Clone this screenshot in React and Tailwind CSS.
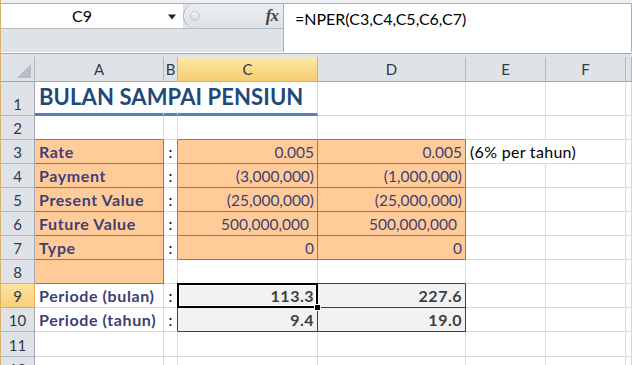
import React from "react";

// column definitions: width classes written out in full
const COLS = [
  { key: "A", w: "w-[129px]" },
  { key: "B", w: "w-[14px]" },
  { key: "C", w: "w-[140px]" },
  { key: "D", w: "w-[148px]" },
  { key: "E", w: "w-[80px]" },
  { key: "F", w: "w-[80px]" },
  { key: "G", w: "w-[6px]" },
];

const ROWS = [
  { n: 1, h: "h-[34px]" },
  { n: 2, h: "h-[24px]" },
  { n: 3, h: "h-[24px]" },
  { n: 4, h: "h-[24px]" },
  { n: 5, h: "h-[24px]" },
  { n: 6, h: "h-[24px]" },
  { n: 7, h: "h-[24px]" },
  { n: 8, h: "h-[24px]" },
  { n: 9, h: "h-[24px]" },
  { n: 10, h: "h-[24px]" },
  { n: 11, h: "h-[25px]" },
  { n: 12, h: "h-[24px]" },
];

const LABELS = {
  3: "Rate",
  4: "Payment",
  5: "Present Value",
  6: "Future Value",
  7: "Type",
  9: "Periode (bulan)",
  10: "Periode (tahun)",
};

const VALUES = {
  3: ["0.005", "0.005"],
  4: ["(3,000,000)", "(1,000,000)"],
  5: ["(25,000,000)", "(25,000,000)"],
  6: ["500,000,000", "500,000,000"],
  7: ["0", "0"],
  9: ["113.3", "227.6"],
  10: ["9.4", "19.0"],
};

function kind(r, c) {
  if (r === 1 && (c === "A" || c === "B" || c === "C")) return "head";
  if (c === "A" && r >= 3 && r <= 8) return "in";
  if ((c === "C" || c === "D") && r >= 3 && r <= 7) return "in";
  if ((c === "C" || c === "D") && (r === 9 || r === 10)) return "out";
  return null;
}

const RIGHT = {
  grid: "border-r-[#d9d9d9]",
  in: "border-r-[#7f7f7f]",
  out: "border-r-[#3f3f3f]",
  none: "border-r-white",
};
const BOTTOM = {
  grid: "border-b border-b-[#d9d9d9]",
  in: "border-b border-b-[#7f7f7f]",
  out: "border-b border-b-[#3f3f3f]",
  head: "border-b-[3px] border-b-[#4f81bd]",
};

function pick(a, b) {
  if (a === "out" || b === "out") return "out";
  if (a === "in" || b === "in") return "in";
  return "grid";
}

function Cell({ r, col, next }) {
  const k = kind(r, col.key);
  let right = RIGHT[pick(k, next ? kind(r, next.key) : null)];
  // cells whose text runs on into the next one
  const spill = (r === 3 && col.key === "E") || (r === 1 && col.key === "A");
  // gridlines covered by that text
  if (spill || (r === 1 && col.key === "B")) right = RIGHT.none;
  const bottom = k === "head" ? BOTTOM.head : BOTTOM[pick(k, kind(r + 1, col.key))];
  const fill = k === "in" ? "bg-[#ffcc99]" : k === "out" ? "bg-[#f2f2f2]" : "bg-white";

  let content = null;
  if (col.key === "A" && r === 1) {
    content = (
      <span className="pl-1 pb-[1px] text-[22px] leading-[26px] font-bold text-[#1f497d] whitespace-nowrap tracking-[0.1px]">
        BULAN SAMPAI PENSIUN
      </span>
    );
  } else if (col.key === "A" && LABELS[r]) {
    content = (
      <span className="pl-1 text-[16px] font-bold text-[#3f3f76] whitespace-nowrap tracking-[0.6px]">
        {LABELS[r]}
      </span>
    );
  } else if (col.key === "B" && LABELS[r]) {
    content = <span className="w-full text-center text-black">:</span>;
  } else if ((col.key === "C" || col.key === "D") && VALUES[r]) {
    const v = VALUES[r][col.key === "C" ? 0 : 1];
    const pad = r === 6 ? "pr-[8px]" : "pr-[3px]";
    const tone =
      k === "out" ? "text-[16px] font-bold text-[#3f3f3f] tracking-[0.5px]" : "text-[#3f3f76]";
    content = <span className={`w-full text-right ${pad} ${tone}`}>{v}</span>;
  } else if (col.key === "E" && r === 3) {
    content = (
      <span className="pl-1 text-[16px] text-black whitespace-nowrap tracking-[0.3px]">(6% per tahun)</span>
    );
  }

  const selected = r === 9 && col.key === "C";

  return (
    <div
      className={`${col.w} shrink-0 border-r ${right} ${bottom} ${fill} relative flex items-end pb-[2px] text-[15.5px] leading-[18px] ${
        spill ? "overflow-visible z-10" : "overflow-hidden"
      } ${selected ? "overflow-visible z-20" : ""}`}
    >
      {content}
      {selected && (
        <>
          <div className="absolute -left-px -top-px -right-px -bottom-px border-2 border-black">
            <div className="w-full h-full border border-white" />
          </div>
          <div className="absolute -right-[4px] -bottom-[4px] w-[7px] h-[7px] bg-black border border-white" />
        </>
      )}
    </div>
  );
}

function ColHeader({ col }) {
  const hot = col.key === "C";
  return (
    <div
      className={`${col.w} shrink-0 h-[25px] flex items-center justify-center text-[15px] border-r border-b ${
        hot
          ? "bg-gradient-to-b from-[#fde9a9] to-[#f7cc6e] border-r-[#e7ac4f] border-b-[#e7ac4f]"
          : "bg-[#dfe3e8] border-r-[#b1b8c1] border-b-[#9ea7b2]"
      } text-[#2e3a48]`}
    >
      {col.key !== "G" ? col.key : ""}
    </div>
  );
}

function RowHeader({ row }) {
  const hot = row.n === 9;
  return (
    <div
      className={`w-[34px] shrink-0 ${row.h} flex items-end justify-center pb-[2px] text-[15px] leading-[18px] border-r border-b ${
        hot
          ? "bg-gradient-to-b from-[#fde3a0] to-[#f8d077] border-r-[#e7ac4f] border-b-[#e7ac4f]"
          : "bg-[#dfe3e8] border-r-[#9ea7b2] border-b-[#b1b8c1]"
      } text-[#2e3a48]`}
    >
      {row.n}
    </div>
  );
}

function FormulaBar() {
  return (
    <div className="h-[57px] bg-[#dfe3e8] flex flex-col">
      <div className="h-[4px] bg-[#eef0f3] border-b border-b-[#a9b0b8]" />
      <div className="flex h-[48px]">
        <div className="w-[282px] flex flex-col">
          <div className="flex h-[25px] border-b border-b-[#b6bcc4]">
            <div className="w-[182px] bg-white flex items-center relative">
              <span className="w-[162px] text-center text-[16px] text-black">C9</span>
              <svg width="10" height="6" viewBox="0 0 10 6" className="absolute left-[166px] top-[10px]">
                <path d="M1 0.5 L9 0.5 L5 5.5 Z" fill="#222" />
              </svg>
            </div>
            <div className="flex-1 flex items-center rounded-l-full border-l border-l-[#aeb5bd] bg-gradient-to-b from-[#eceff2] to-[#dde1e6]">
              <div className="ml-[6px] w-[10px] h-[10px] rounded-full bg-gradient-to-b from-[#f4f5f7] to-[#d3d7dc] border border-[#c3c8ce]" />
              <span className="ml-auto mr-[5px] text-[17px] italic font-bold text-[#444] font-['Liberation_Serif',serif] tracking-[-1px]">
                fx
              </span>
            </div>
          </div>
          <div className="flex-1" />
        </div>
        <div className="flex-1 bg-white border-l border-l-[#a9b0b8] border-r border-r-[#a9b0b8] pl-[11px] pt-[3px] text-[16px] text-black">
          =NPER(C3,C4,C5,C6,C7)
        </div>
      </div>
      <div className="h-[2px] bg-white border-b border-b-[#a3aab3]" />
      <div className="flex-1" />
    </div>
  );
}

export default function App() {
  return (
    <div className="w-[632px] h-[365px] overflow-hidden bg-white border-l border-l-[#d6b46a] font-['Lato','Liberation_Sans',sans-serif]">
      <FormulaBar />
      <div className="flex">
        <div className="w-[34px] shrink-0 h-[25px] bg-[#dfe3e8] border-r border-b border-r-[#b1b8c1] border-b-[#9ea7b2] flex items-end justify-end pr-[3px] pb-[3px]">
          <svg width="14" height="14" viewBox="0 0 14 14">
            <path d="M14 0 L14 14 L0 14 Z" fill="#b7bdc5" />
          </svg>
        </div>
        {COLS.map((c) => (
          <ColHeader key={c.key} col={c} />
        ))}
      </div>
      {ROWS.map((row) => (
        <div key={row.n} className={`flex ${row.h}`}>
          <RowHeader row={row} />
          {COLS.map((c, i) => (
            <Cell key={c.key} r={row.n} col={c} next={COLS[i + 1]} />
          ))}
        </div>
      ))}
    </div>
  );
}
